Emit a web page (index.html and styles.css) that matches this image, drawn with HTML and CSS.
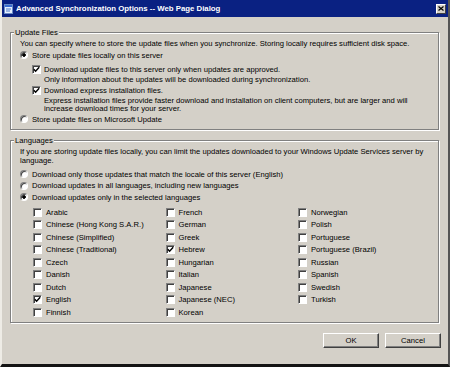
FILE: index.html
```html
<!DOCTYPE html>
<html lang="en">
<head>
<meta charset="utf-8">
<title>Advanced Synchronization Options -- Web Page Dialog</title>
<link rel="stylesheet" href="styles.css">
</head>
<body>
<div class="window">
  <div class="titlebar">
    <svg class="appicon" width="9" height="10" viewBox="0 0 9 10">
      <rect x="0.5" y="0.5" width="8" height="9" fill="#e8f0ff" stroke="#6a8cc8"/>
      <rect x="1" y="1" width="7" height="2" fill="#3a6cd0"/>
      <path d="M2 5 h5 M2 7 h4" stroke="#4a78c8" stroke-width="1"/>
    </svg>
    <span class="title">Advanced Synchronization Options -- Web Page Dialog</span>
    <span class="close"><svg width="6" height="5" viewBox="0 0 6 5"><path d="M0.5 0.5 L5.5 4.5 M5.5 0.5 L0.5 4.5" stroke="#000" stroke-width="1.2"/></svg></span>
  </div>
  <div class="content">
    <fieldset class="group update">
      <legend>Update Files</legend>
      <p class="desc">You can specify where to store the update files when you synchronize. Storing locally requires sufficient disk space.</p>
      <div class="row r1"><span class="radio on"></span><span>Store update files locally on this server</span></div>
      <div class="sub">
        <div class="row c1"><span class="check"><svg width="7" height="7" viewBox="0 0 7 7"><path d="M0.8 3.2 L2.6 5.2 L6.2 1.2" fill="none" stroke="#000" stroke-width="1.4"/></svg></span><span>Download update files to this server only when updates are approved.</span></div>
        <p class="note n1">Only information about the updates will be downloaded during synchronization.</p>
        <div class="row c2"><span class="check"><svg width="7" height="7" viewBox="0 0 7 7"><path d="M0.8 3.2 L2.6 5.2 L6.2 1.2" fill="none" stroke="#000" stroke-width="1.4"/></svg></span><span>Download express installation files.</span></div>
        <p class="note n2">Express installation files provide faster download and installation on client computers, but are larger and will<br>increase download times for your server.</p>
      </div>
      <div class="row"><span class="radio"></span><span>Store update files on Microsoft Update</span></div>
    </fieldset>

    <fieldset class="group langs">
      <legend>Languages</legend>
      <p class="desc">If you are storing update files locally, you can limit the updates downloaded to your Windows Update Services server by<br>language.</p>
      <div class="radios">
        <div class="row lr"><span class="radio"></span><span>Download only those updates that match the locale of this server (English)</span></div>
        <div class="row lr"><span class="radio"></span><span>Download updates in all languages, including new languages</span></div>
        <div class="row lr"><span class="radio on"></span><span>Download updates only in the selected languages</span></div>
      </div>
      <div class="grid">
        <div class="row"><span class="check"></span><span>Arabic</span></div>
        <div class="row"><span class="check"></span><span>Chinese (Hong Kong S.A.R.)</span></div>
        <div class="row"><span class="check"></span><span>Chinese (Simplified)</span></div>
        <div class="row"><span class="check"></span><span>Chinese (Traditional)</span></div>
        <div class="row"><span class="check"></span><span>Czech</span></div>
        <div class="row"><span class="check"></span><span>Danish</span></div>
        <div class="row"><span class="check"></span><span>Dutch</span></div>
        <div class="row"><span class="check"><svg width="7" height="7" viewBox="0 0 7 7"><path d="M0.8 3.2 L2.6 5.2 L6.2 1.2" fill="none" stroke="#000" stroke-width="1.4"/></svg></span><span>English</span></div>
        <div class="row"><span class="check"></span><span>Finnish</span></div>
        <div class="row"><span class="check"></span><span>French</span></div>
        <div class="row"><span class="check"></span><span>German</span></div>
        <div class="row"><span class="check"></span><span>Greek</span></div>
        <div class="row"><span class="check"><svg width="7" height="7" viewBox="0 0 7 7"><path d="M0.8 3.2 L2.6 5.2 L6.2 1.2" fill="none" stroke="#000" stroke-width="1.4"/></svg></span><span>Hebrew</span></div>
        <div class="row"><span class="check"></span><span>Hungarian</span></div>
        <div class="row"><span class="check"></span><span>Italian</span></div>
        <div class="row"><span class="check"></span><span>Japanese</span></div>
        <div class="row"><span class="check"></span><span>Japanese (NEC)</span></div>
        <div class="row"><span class="check"></span><span>Korean</span></div>
        <div class="row"><span class="check"></span><span>Norwegian</span></div>
        <div class="row"><span class="check"></span><span>Polish</span></div>
        <div class="row"><span class="check"></span><span>Portuguese</span></div>
        <div class="row"><span class="check"></span><span>Portuguese (Brazil)</span></div>
        <div class="row"><span class="check"></span><span>Russian</span></div>
        <div class="row"><span class="check"></span><span>Spanish</span></div>
        <div class="row"><span class="check"></span><span>Swedish</span></div>
        <div class="row"><span class="check"></span><span>Turkish</span></div>
      </div>
    </fieldset>

    <div class="buttons">
      <button class="btn" type="button">OK</button>
      <button class="btn" type="button">Cancel</button>
    </div>
  </div>
</div>
</body>
</html>
```
FILE: styles.css
```css
* { box-sizing: border-box; }
html, body { margin: 0; padding: 0; }
body {
  width: 450px;
  height: 367px;
  overflow: hidden;
  background: #d4d0c8;
  font-family: "Liberation Sans", Arial, sans-serif;
  font-size: 7.65px;
  line-height: 9px;
  color: #000;
}
.window {
  width: 450px;
  height: 367px;
  display: flex;
  flex-direction: column;
  background: #d4d0c8;
  border-left: 2px solid #eeece6;
  border-right: 2px solid #555;
  border-bottom: 3px solid #141414;
}
.titlebar {
  height: 17px;
  flex: none;
  background: #0a2182;
  display: flex;
  align-items: center;
  padding: 0 2px 0 2px;
  gap: 3px;
  color: #fff;
  font-weight: bold;
  font-size: 7.8px;
  white-space: nowrap;
}
.appicon { flex: none; }
.title { flex: 1; }
.close {
  width: 10px;
  height: 10px;
  flex: none;
  background: #d4d0c8;
  border: 1px solid;
  border-color: #fff #404040 #404040 #fff;
  display: flex;
  align-items: center;
  justify-content: center;
}
.content {
  flex: 1;
  display: flex;
  flex-direction: column;
  padding: 10.5px 7px 0 8px;
}
.group {
  margin: 0 2px 0 0;
  border: 1px solid #808080;
  box-shadow: 1px 1px 0 #fff, inset 1px 1px 0 #fff;
  min-inline-size: 0;
  padding: 2px 8px 4.5px 9px;
}
.group legend {
  padding: 0 1px;
  margin-left: -6px;
  background: #d4d0c8;
  line-height: 9px;
}
.desc, .note { margin: 0; white-space: nowrap; }
.row {
  display: flex;
  align-items: center;
  gap: 4px;
  height: 11px;
  white-space: nowrap;
}
.r1 { margin-top: 2px; }
.sub { margin-left: 12px; }
.c1 { margin-top: 3px; }
.c2 { margin-top: 1px; }
.sub .row { gap: 3px; }
.note { padding-left: 12px; }
.n2 { margin-top: 1px; line-height: 8.5px; }
.radio {
  width: 8px;
  height: 8px;
  flex: none;
  border-radius: 50%;
  border: 1px solid;
  border-color: #808080 #fff #fff #808080;
  background: #fff;
  box-shadow: inset 1px 1px 0 #404040;
}
.radio.on {
  background: radial-gradient(circle, #000 0 1.5px, #fff 2px);
}
.check {
  width: 9px;
  height: 9px;
  flex: none;
  border: 1px solid;
  border-color: #808080 #fff #fff #808080;
  box-shadow: inset 1px 1px 0 #404040;
  background: #fff;
  display: flex;
  align-items: center;
  justify-content: center;
}
.langs { margin-top: 5.5px; padding-bottom: 3.75px; }
.radios { margin-top: 4px; }
.lr { height: 11.5px; }
.grid {
  margin: 2.75px 0 0 13px;
  display: grid;
  grid-template-columns: repeat(3, 132.5px);
  grid-template-rows: repeat(9, 12.5px);
  grid-auto-flow: column;
}
.grid .row { height: 12.5px; gap: 4px; }
.buttons {
  margin-top: 10px;
  display: flex;
  justify-content: flex-end;
  gap: 6px;
}
.btn {
  width: 56px;
  height: 15px;
  padding: 0;
  margin: 0;
  font: inherit;
  color: #000;
  background: #d4d0c8;
  border: 1px solid;
  border-color: #fff #404040 #404040 #fff;
  box-shadow: inset -1px -1px 0 #808080;
}
```
